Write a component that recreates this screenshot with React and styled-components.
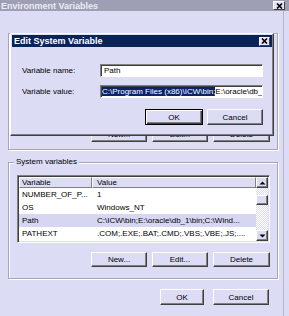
import React from "react";
import styled, { createGlobalStyle } from "styled-components";

const GlobalStyle = createGlobalStyle`
    html, body {
        margin: 0;
        padding: 0;
        background: #dcdcf5;
    }
    * {
        box-sizing: border-box;
    }
`;

const Window = styled.div`
    position: relative;
    width: 289px;
    height: 316px;
    overflow: hidden;
    display: flex;
    flex-direction: column;
    background: #dcdcf5;
    font-family: "Liberation Sans", Arial, sans-serif;
    font-size: 8px;
    color: #000;
`;

const TitleBar = styled.div`
    height: 11px;
    flex: none;
    display: flex;
    align-items: center;
    justify-content: space-between;
    padding: 0 4px 0 1px;
    background: ${(p) => (p.active ? "#0a2456" : "#9e9eb4")};
    color: ${(p) => (p.active ? "#fff" : "#ececf4")};
    font-size: 9px;
    font-weight: bold;
    white-space: nowrap;
`;

const CloseButton = styled.div`
    width: ${(p) => p.w}px;
    height: 9px;
    display: flex;
    align-items: center;
    justify-content: center;
    background: #e4e4f8;
    border: 1px solid;
    border-color: #fff #404040 #404040 #fff;
`;

const Body = styled.div`
    flex: 1;
    display: flex;
    flex-direction: column;
    padding: 0 11px 0 8px;
    box-shadow: inset -5px 0 0 #dcdcf5, inset -6px 0 0 #b4b4cc;
`;

const GroupBox = styled.div`
    position: relative;
    height: 117px;
    margin-top: ${(p) => p.top}px;
    display: flex;
    flex-direction: column;
    border: 1px solid #a4a4bc;
    box-shadow: inset 1px 1px 0 #fff, 1px 1px 0 #fff;
    padding: ${(p) => p.pad};
    justify-content: ${(p) => p.justify || "flex-start"};
`;

const GroupLabel = styled.span`
    position: absolute;
    left: 5px;
    top: ${(p) => p.top}px;
    line-height: 10px;
    padding: 0 2px;
    background: #dcdcf5;
    white-space: nowrap;
`;

const ButtonRow = styled.div`
    display: flex;
    justify-content: flex-end;
    gap: ${(p) => p.gap}px;
    margin-top: ${(p) => p.top || 0}px;
    padding-right: ${(p) => p.right || 0}px;
`;

const Button = styled.button`
    width: ${(p) => p.w}px;
    height: ${(p) => p.h || 15}px;
    padding: 0;
    font: inherit;
    color: #000;
    background: #dcdcf5;
    border: 1px solid;
    border-color: ${(p) => (p.primary ? "#000" : "#fff #404040 #404040 #fff")};
    box-shadow: ${(p) =>
        p.primary
            ? "inset 1px 1px 0 #fff, inset -1px -1px 0 #404040, inset -2px -2px 0 #808080"
            : "inset -1px -1px 0 #808080"};
`;

const ListView = styled.div`
    height: 68px;
    display: flex;
    background: #fff;
    border: 1px solid;
    border-color: #808080 #fff #fff #808080;
    box-shadow: inset 1px 1px 0 #404040, inset -1px -1px 0 #dcdcf5;
    padding: 1px;
    overflow: hidden;
`;

const Table = styled.div`
    flex: 1;
    overflow: hidden;
    display: flex;
    flex-direction: column;
`;

const HeaderRow = styled.div`
    display: flex;
    height: 11px;
    flex: none;
`;

const HeaderCell = styled.div`
    width: ${(p) => (p.w ? p.w + "px" : "auto")};
    flex: ${(p) => (p.w ? "none" : 1)};
    display: flex;
    align-items: center;
    padding-left: ${(p) => p.pl}px;
    background: #dcdcf5;
    border: 1px solid;
    border-color: #fff #808080 #808080 #fff;
    white-space: nowrap;
`;

const Row = styled.div`
    display: flex;
    height: 13px;
    flex: none;
    align-items: center;
    background: ${(p) => (p.selected ? "#d6d6f2" : "#fff")};
    white-space: nowrap;
`;

const Cell = styled.div`
    width: ${(p) => (p.w ? p.w + "px" : "auto")};
    flex: ${(p) => (p.w ? "none" : 1)};
    padding-left: ${(p) => p.pl}px;
    overflow: hidden;
`;

const ScrollBar = styled.div`
    width: 12px;
    flex: none;
    display: flex;
    flex-direction: column;
`;

const ScrollArrow = styled.div`
    height: 11px;
    flex: none;
    display: flex;
    align-items: center;
    justify-content: center;
    background: #dcdcf5;
    border: 1px solid;
    border-color: #fff #404040 #404040 #fff;
    box-shadow: inset -1px -1px 0 #808080;
`;

const Track = styled.div`
    flex: 1;
    background-color: #fff;
    background-image: repeating-conic-gradient(#dcdcf5 0 25%, #fff 0 50%);
    background-size: 2px 2px;
`;

const Thumb = styled.div`
    height: 10px;
    margin-top: 7px;
    background: #dcdcf5;
    border: 1px solid;
    border-color: #fff #404040 #404040 #fff;
    box-shadow: inset -1px -1px 0 #808080;
`;

const Dialog = styled.div`
    position: absolute;
    left: 10px;
    top: 33px;
    width: 264px;
    height: 103px;
    display: flex;
    flex-direction: column;
    padding: 1px;
    background: #dcdcf5;
    border: 1px solid;
    border-color: #fff #404040 #404040 #fff;
    box-shadow: inset -1px -1px 0 #808080;
`;

const DialogTitle = styled(TitleBar)`
    height: 12px;
    padding: 0 2px 0 2px;
`;

const DialogBody = styled.div`
    padding: 17px 9px 0 10px;
`;

const Form = styled.div`
    display: grid;
    grid-template-columns: 78px 163px;
    row-gap: 8px;
    align-items: center;
`;

const Label = styled.span`
    white-space: nowrap;
`;

const TextBox = styled.div`
    height: 13px;
    display: flex;
    align-items: center;
    padding: 0 3px;
    background: #fff;
    border: 1px solid;
    border-color: #808080 #fff #fff #808080;
    box-shadow: inset 1px 1px 0 #404040;
    white-space: nowrap;
    overflow: hidden;
`;

const Selected = styled.span`
    margin-left: -2px;
    background: #0a246a;
    color: #fff;
`;

const Cross = () => (
    <svg width="7" height="6" viewBox="0 0 7 6">
        <path d="M1 0.5 L6 5.5 M6 0.5 L1 5.5" stroke="#000" strokeWidth="1.6" fill="none" />
    </svg>
);

const Arrow = ({ down }) => (
    <svg width="7" height="4" viewBox="0 0 7 4">
        <polygon points={down ? "0.5,0.5 6.5,0.5 3.5,3.5" : "0.5,3.5 6.5,3.5 3.5,0.5"} fill="#000" />
    </svg>
);

const rows = [
    { name: "NUMBER_OF_P...", value: "1" },
    { name: "OS", value: "Windows_NT" },
    { name: "Path", value: "C:\\ICW\\bin;E:\\oracle\\db_1\\bin;C:\\Wind...", selected: true },
    { name: "PATHEXT", value: ".COM;.EXE;.BAT;.CMD;.VBS;.VBE;.JS;...." },
    { name: "PROCESSOR_A...", value: "x86" },
];

const App = () => {
    return (
        <Window>
            <GlobalStyle />
            <TitleBar>
                <span>Environment Variables</span>
                <CloseButton w={12}>
                    <Cross />
                </CloseButton>
            </TitleBar>

            <Body>
                <GroupBox top={22} pad="0 7px 7px 0" justify="flex-end">
                    {/* mostly hidden behind the dialog, only the letter tops peek out */}
                    <GroupLabel top={-3}>User variables for Administrator</GroupLabel>
                    <ButtonRow gap={5}>
                        <Button w={56}>New...</Button>
                        <Button w={56}>Edit...</Button>
                        <Button w={57}>Delete</Button>
                    </ButtonRow>
                </GroupBox>

                <GroupBox top={12} pad="12px 7px 10px 8px">
                    <GroupLabel top={-6}>System variables</GroupLabel>
                    <ListView>
                        <Table>
                            <HeaderRow>
                                <HeaderCell w={73} pl={2}>Variable</HeaderCell>
                                <HeaderCell pl={4}>Value</HeaderCell>
                            </HeaderRow>
                            {rows.map((r) => (
                                <Row key={r.name} selected={r.selected}>
                                    <Cell w={73} pl={3}>{r.name}</Cell>
                                    <Cell pl={5}>{r.value}</Cell>
                                </Row>
                            ))}
                        </Table>
                        <ScrollBar>
                            <ScrollArrow>
                                <Arrow />
                            </ScrollArrow>
                            <Track>
                                <Thumb />
                            </Track>
                            <ScrollArrow>
                                <Arrow down />
                            </ScrollArrow>
                        </ScrollBar>
                    </ListView>
                    <ButtonRow gap={5} top={9}>
                        <Button w={56}>New...</Button>
                        <Button w={56}>Edit...</Button>
                        <Button w={57}>Delete</Button>
                    </ButtonRow>
                </GroupBox>

                <ButtonRow gap={9} top={10} right={9}>
                    <Button w={44} h={16}>OK</Button>
                    <Button w={56} h={16}>Cancel</Button>
                </ButtonRow>
            </Body>

            <Dialog>
                <DialogTitle active>
                    <span>Edit System Variable</span>
                    <CloseButton w={11}>
                        <Cross />
                    </CloseButton>
                </DialogTitle>
                <DialogBody>
                    <Form>
                        <Label>Variable name:</Label>
                        <TextBox>Path</TextBox>
                        <Label>Variable value:</Label>
                        <TextBox>
                            <Selected>C:\Program Files (x86)\ICW\bin;</Selected>
                            <span>E:\oracle\db_1\bin;C:\Windows</span>
                        </TextBox>
                    </Form>
                    <ButtonRow gap={4} top={11}>
                        <Button primary w={58} h={16}>OK</Button>
                        <Button w={56} h={16}>Cancel</Button>
                    </ButtonRow>
                </DialogBody>
            </Dialog>
        </Window>
    );
};

export default App;
